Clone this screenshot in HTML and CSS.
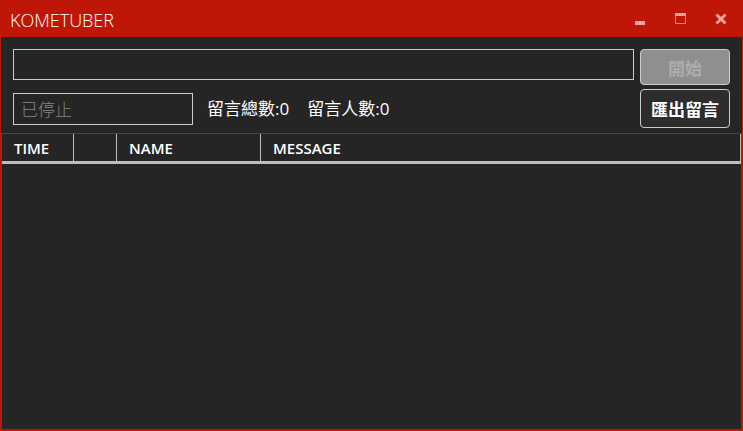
FILE: index.html
```html
<!DOCTYPE html>
<html lang="zh-Hant">
<head>
<meta charset="utf-8">
<meta name="viewport" content="width=device-width, initial-scale=1">
<title>KOMETUBER</title>
<link rel="stylesheet" href="styles.css">
</head>
<body>
<div class="window">
  <header class="titlebar">
    <h1 class="title">KOMETUBER</h1>
    <div class="controls">
      <button class="control" type="button" aria-label="Minimize">
        <svg width="12" height="12" viewBox="0 0 12 12" shape-rendering="crispEdges"><path d="M0 8h10v4H0z" fill="#e9a29c"/></svg>
      </button>
      <button class="control" type="button" aria-label="Maximize">
        <svg width="12" height="12" viewBox="0 0 12 12" shape-rendering="crispEdges"><path d="M0 0h11v3H0z" fill="#e9a29c"/><path d="M.5 3v7.500h10V3" fill="none" stroke="#e0837b"/></svg>
      </button>
      <button class="control" type="button" aria-label="Close">
        <svg width="12" height="12" viewBox="0 0 12 12"><path d="M1.500 1.500l9 9M10.500 1.500l-9 9" stroke="#e9a29c" stroke-width="3"/></svg>
      </button>
    </div>
  </header>
  <main class="content">
    <div class="toolbar">
      <input class="url" type="text" aria-label="URL">
      <button class="button" type="button" disabled>開始</button>
      <div class="info">
        <input class="status" type="text" value="已停止" aria-label="Status" disabled>
        <span class="count">留言總數:0</span>
        <span class="count">留言人數:0</span>
      </div>
      <button class="button export" type="button">匯出留言</button>
    </div>
    <div class="list">
      <table class="comments">
        <thead>
          <tr>
            <th class="col-time">TIME</th>
            <th class="col-icon"></th>
            <th class="col-name">NAME</th>
            <th>MESSAGE</th>
          </tr>
        </thead>
        <tbody></tbody>
      </table>
    </div>
  </main>
</div>
</body>
</html>
```
FILE: styles.css
```css
* {
  box-sizing: border-box;
}

body {
  margin: 0;
  background: #252525;
  color: #fff;
  font-family: "Open Sans", "Noto Sans CJK TC", sans-serif;
  font-size: 17px;
}

.window {
  display: flex;
  flex-direction: column;
  min-height: 100vh;
  border: 1px solid #bf1707;
  border-top: 0;
}

.titlebar {
  display: flex;
  align-items: center;
  justify-content: space-between;
  height: 37px;
  padding: 0 15px 0 9px;
  background: #bf1707;
}

.title {
  margin: 0;
  padding-top: 3px;
  font-size: 18px;
  font-weight: 300;
  line-height: 24px;
}

.controls {
  display: flex;
  gap: 28px;
}

.control {
  display: flex;
  padding: 0;
  border: 0;
  background: none;
}

.content {
  display: flex;
  flex: 1;
  flex-direction: column;
}

.toolbar {
  display: grid;
  grid-template-columns: 1fr 90px;
  grid-template-rows: 36px 39px;
  gap: 4px 6px;
  padding: 12px 12px 5px;
}

.url,
.status {
  height: 32px;
  padding: 0 7px;
  border: 1px solid #ccc;
  border-radius: 0;
  background: #252525;
  color: #fff;
  font: inherit;
}

.url {
  width: 100%;
  height: 31px;
}

.info {
  display: flex;
  align-items: center;
}

.status {
  width: 180px;
  margin-right: 14px;
  color: #858585;
  font-weight: 300;
}

.count {
  margin-right: 18px;
  line-height: 24px;
  white-space: nowrap;
}

.button {
  padding: 0;
  border: 1px solid #ccc;
  border-radius: 4px;
  background: #8f8f8f;
  color: #adadad;
  font: inherit;
  font-weight: 700;
}

.export {
  background: #2d2d2d;
  color: #fff;
}

.list {
  flex: 1;
  border: 1px solid #bf1707;
}

.comments {
  width: 100%;
  border-collapse: separate;
  border-spacing: 0;
  table-layout: fixed;
}

.comments th {
  height: 30px;
  padding: 0 12px;
  border-bottom: 3px solid #bdbdbd;
  background: linear-gradient(#bdbdbd, #bdbdbd) right / 1px 100% no-repeat;
  font-size: 15px;
  font-weight: 600;
  line-height: 20px;
  text-align: left;
}

.col-time {
  width: 72px;
}

.col-icon {
  width: 43px;
}

.col-name {
  width: 144px;
}
```
